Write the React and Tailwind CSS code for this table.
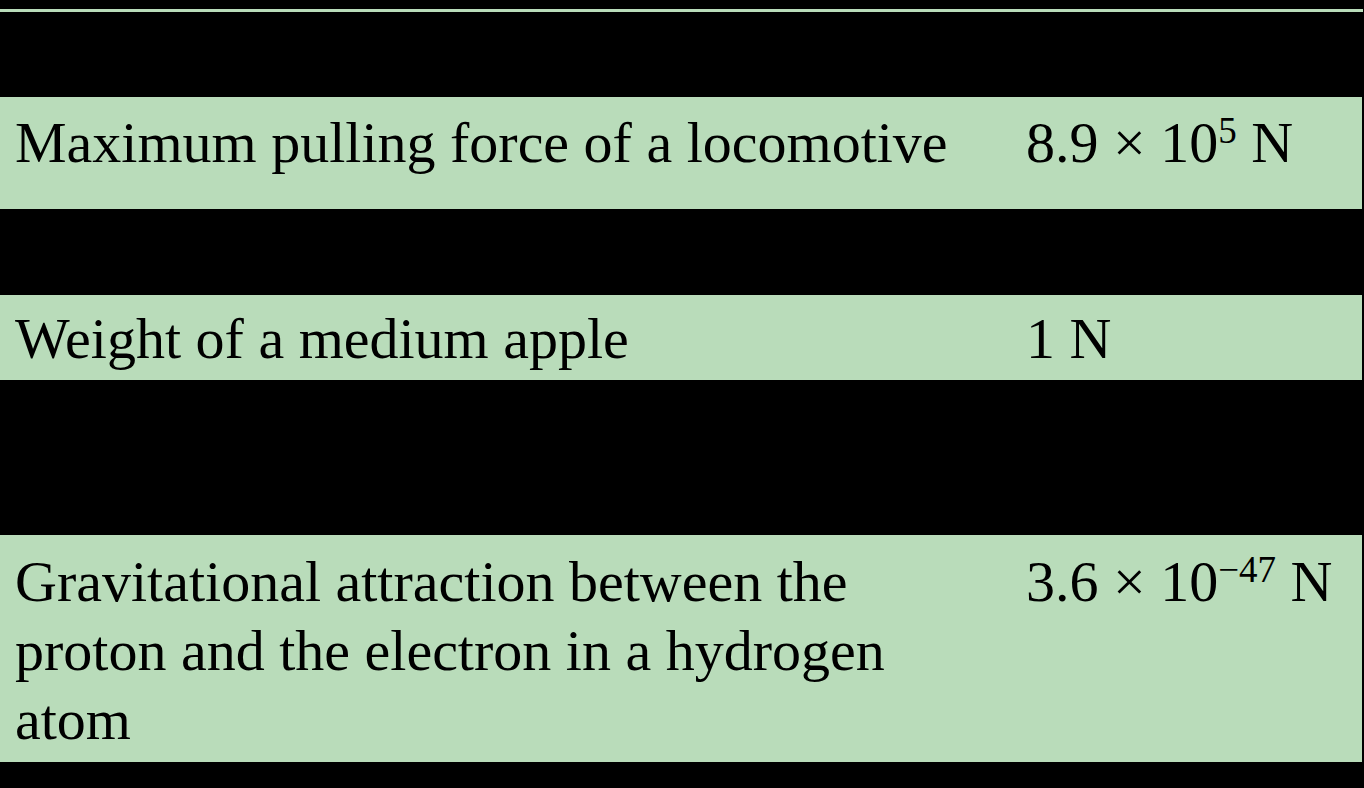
import React from 'react';

const rows = [
  {
    label: 'Maximum pulling force of a locomotive',
    base: '8.9 × 10',
    exp: '5',
    box: 'h-[112px] pt-[11px]',
  },
  {
    label: 'Weight of a medium apple',
    base: '1 N',
    exp: null,
    box: 'h-[85px] pt-[9px]',
  },
  {
    label: 'Gravitational attraction between the proton and the electron in a hydrogen atom',
    base: '3.6 × 10',
    exp: '−47',
    box: 'h-[227px] pt-[12px]',
  },
];

// black gaps between the green rows
const gaps = ['h-[85px]', 'h-[86px]', 'h-[155px]'];

const Row = ({ row }) => (
  <div className={`grid grid-cols-[1011px_1fr] w-[1362px] bg-[#b9dcba] text-black ${row.box}`}>
    <div className="pl-[15px] pr-[40px]">{row.label}</div>
    <div className="pl-[15px] whitespace-nowrap">
      {row.base}
      {row.exp && (
        <>
          <span className="text-[37px] leading-[0] align-[19px]">{row.exp}</span> N
        </>
      )}
    </div>
  </div>
);

const App = () => {
  return (
    <div
      className="w-[1364px] h-[788px] bg-black overflow-hidden text-[58px] leading-[69px]"
      style={{ fontFamily: '"Liberation Serif", "Times New Roman", serif' }}
    >
      <div className="h-[9px]" />
      <div className="h-[3px] w-[1363px] bg-[#b9dcba]" />
      {rows.map((row, i) => (
        <React.Fragment key={i}>
          <div className={gaps[i]} />
          <Row row={row} />
        </React.Fragment>
      ))}
    </div>
  );
};

export default App;
